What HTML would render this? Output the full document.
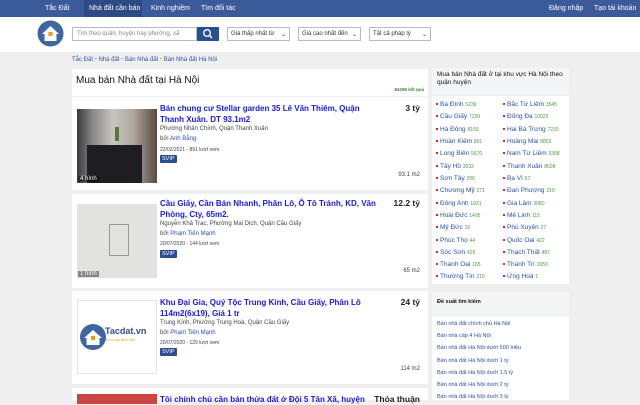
<!DOCTYPE html>
<html><head><meta charset="utf-8"><style>
*{margin:0;padding:0;box-sizing:border-box}
body{width:640px;height:400px;overflow:hidden;background:#efefef;font-family:"Liberation Sans",Arial,sans-serif;position:relative}
.nav{position:absolute;left:0;top:0;width:640px;height:17px;background:#3b5a9a;color:#fff;font-size:7px}
.nav span{position:absolute;top:5px}
.hdr{position:absolute;top:17px;left:0;width:640px;height:35px;background:#fff}
.a{position:absolute}
.link{color:#2b52a8}
.card{position:absolute;left:72px;width:356px;background:#fff}
.img{position:absolute;left:5px;top:12px;width:80px;height:74px;overflow:hidden}
.t{position:absolute;left:88px;top:6px;width:225px;font-size:8px;font-weight:bold;color:#1919e0;line-height:11px}
.pr{position:absolute;right:8px;top:6px;font-size:8.5px;font-weight:bold;color:#222}
.sm{position:absolute;left:88px;font-size:5.8px;color:#444}
.svip{position:absolute;left:88px;background:#2b4e8f;color:#fff;font-size:5.5px;padding:1px 2px;border-radius:1px}
.m2{position:absolute;right:8px;font-size:6px;color:#444}
.cap{position:absolute;left:1px;bottom:1px;color:#fff;font-size:6px;background:rgba(0,0,0,.4);padding:0 2px}
.side{position:absolute;left:432px;width:137px;background:#fff}
.d{position:absolute;font-size:6.5px;color:#2b52a8}
.d:before{content:"";display:inline-block;width:2px;height:2px;background:#e22;margin-right:2px;vertical-align:middle}
.d i{font-style:normal;color:#4a9a3a;font-size:5px}
.s{position:absolute;left:5px;font-size:5.5px;color:#2b52a8}
</style></head><body>
<div class="nav">
<span style="left:45px">Tắc Đất</span>
<div style="position:absolute;left:84px;top:0;width:58px;height:17px;background:#2d4a85"></div>
<span style="left:89px">Nhà đất cần bán</span>
<span style="left:151px">Kinh nghiệm</span>
<span style="left:201px">Tìm đối tác</span>
<span style="left:549px">Đăng nhập</span>
<span style="left:594px">Tạo tài khoản</span>
</div>
<div class="hdr">
<svg class="a" style="left:37px;top:3px" width="27" height="27" viewBox="0 0 27 27"><circle cx="13.5" cy="13.5" r="13" fill="#3e66a0"/><path d="M5 14 L13.5 6 L22 14 H19.5 V21 H7.5 V14Z" fill="#fff"/><rect x="11.5" y="12" width="4" height="4" fill="#e79a1f"/></svg>
<div class="a" style="left:72px;top:10px;width:125px;height:14px;border:1px solid #bbb;font-size:6px;color:#888;padding:3px 4px">Tìm theo quận, huyện hay phường, xã</div>
<div class="a" style="left:197px;top:10px;width:22px;height:14px;background:#2c4f8f"><svg width="22" height="14"><circle cx="10" cy="6" r="3.3" stroke="#fff" stroke-width="1.4" fill="none"/><path d="M12.5 8.5 L15 11" stroke="#fff" stroke-width="1.5"/></svg></div>
<div class="a" style="left:227px;top:10px;width:63px;height:14px;border:1px solid #bbb;font-size:6px;color:#333;padding:3px 3px">Giá thấp nhất từ<span style="position:absolute;right:3px">⌄</span></div>
<div class="a" style="left:298px;top:10px;width:63px;height:14px;border:1px solid #bbb;font-size:6px;color:#333;padding:3px 3px">Giá cao nhất đến<span style="position:absolute;right:3px">⌄</span></div>
<div class="a" style="left:369px;top:10px;width:62px;height:14px;border:1px solid #bbb;font-size:6px;color:#333;padding:3px 3px">Tất cả pháp lý<span style="position:absolute;right:3px">⌄</span></div>
</div>
<div class="a link" style="left:72px;top:57px;font-size:6px">Tắc Đất <span style="color:#e79a1f">•</span> Nhà đất <span style="color:#e79a1f">•</span> Bán Nhà đất <span style="color:#e79a1f">•</span> Bán Nhà đất Hà Nội</div>
<div class="card" style="top:69px;height:27px">
<div class="a" style="left:4px;top:6px;font-size:10px;color:#111">Mua bán Nhà đất tại Hà Nội</div>
<div class="a" style="right:4px;top:18px;font-size:4.5px;color:#3a8a2a;font-weight:bold">84295 kết quả</div>
</div>
<div class="card" style="top:97px;height:93px">
<div class="img" style="background:linear-gradient(90deg,#3a3a3a 0,#8a8a8a 20%,#c8c4c0 45%,#b0a8a0 70%,#5a4a40 100%)"><div style="position:absolute;left:10px;top:36px;width:55px;height:38px;background:#1e1e22"></div><div style="position:absolute;left:38px;top:18px;width:4px;height:14px;background:#5a7a3a"></div><span class="cap">4 hình</span></div>
<div class="t">Bán chung cư Stellar garden 35 Lê Văn Thiêm, Quận Thanh Xuân. DT 93.1m2</div>
<div class="pr">3 tỷ</div>
<div class="sm" style="top:29px;font-size:6px">Phường Nhân Chính, Quận Thanh Xuân</div>
<div class="sm" style="top:39px;font-size:6px">bởi <span class="link">Anh Bằng</span></div>
<div class="sm" style="top:50px;font-size:5px">22/02/2021 - 891 lượt xem</div>
<div class="svip" style="top:58px">SVIP</div>
<div class="m2" style="top:75px">93.1 m2</div>
</div>
<div class="card" style="top:194px;height:94px">
<div class="img" style="top:10px;background:#e2e2df"><div style="position:absolute;left:32px;top:20px;width:20px;height:32px;border:1px solid #999"></div><span class="cap">1 hình</span></div>
<div class="t" style="top:4px">Cầu Giấy, Cần Bán Nhanh, Phân Lô, Ô Tô Tránh, KD, Văn Phòng, Cty, 65m2.</div>
<div class="pr" style="top:4px">12.2 tỷ</div>
<div class="sm" style="top:27px;font-size:6px">Nguyễn Khả Trạc, Phường Mai Dịch, Quận Cầu Giấy</div>
<div class="sm" style="top:37px;font-size:6px">bởi <span class="link">Phạm Tiến Mạnh</span></div>
<div class="sm" style="top:47px;font-size:5px">20/07/2020 - 144 lượt xem</div>
<div class="svip" style="top:56px">SVIP</div>
<div class="m2" style="top:74px">65 m2</div>
</div>
<div class="card" style="top:291px;height:93px">
<div class="img" style="top:9px;border:1px solid #e5e5e5;background:#fff">
<svg style="position:absolute;left:1px;top:22px" width="28" height="28"><circle cx="14" cy="14" r="13" fill="#3e66a0"/><path d="M5 15 L14 7 L23 15 H20.5 V22 H7.5 V15Z" fill="#fff"/><rect x="12" y="13" width="4" height="4" fill="#e79a1f"/></svg>
<div style="position:absolute;left:27px;top:25px;font-size:9px;font-weight:bold;color:#2d4f8a">Tacdat.vn</div>
<div style="position:absolute;left:27px;top:37px;font-size:3.5px;color:#e79a1f;font-style:italic">An cư gia đình Việt</div></div>
<div class="t" style="top:6px">Khu Đại Gia, Quý Tộc Trung Kinh, Cầu Giấy, Phân Lô 114m2(6x19), Giá 1 tr</div>
<div class="pr" style="top:6px">24 tỷ</div>
<div class="sm" style="top:29px;font-size:6px">Trung Kính, Phường Trung Hoà, Quận Cầu Giấy</div>
<div class="sm" style="top:39px;font-size:6px">bởi <span class="link">Phạm Tiến Mạnh</span></div>
<div class="sm" style="top:49px;font-size:5px">20/07/2020 - 129 lượt xem</div>
<div class="svip" style="top:57px">SVIP</div>
<div class="m2" style="top:75px">114 m2</div>
</div>
<div class="card" style="top:388px;height:12px">
<div class="img" style="top:6px;height:10px;background:#c44"></div>
<div class="t" style="top:6px;width:225px;white-space:nowrap;overflow:hidden">Tôi chính chủ cần bán thửa đất ở Đội 5 Tân Xã, huyện</div>
<div class="pr" style="top:6px">Thỏa thuận</div>
</div>
<div class="side" style="top:68px;height:26px;background:#f4f5f7"><div class="a" style="left:5px;top:3px;font-size:6.5px;color:#111;line-height:8px">Mua bán Nhà đất ở tại khu vực Hà Nội theo quận huyện</div></div>
<div class="side" style="top:96px;height:188px"></div>
<div class="d" style="left:436px;top:101px">Ba Đình <i>5239</i></div><div class="d" style="left:503px;top:101px">Bắc Từ Liêm <i>3545</i></div>
<div class="d" style="left:436px;top:113px">Cầu Giấy <i>7159</i></div><div class="d" style="left:503px;top:113px">Đống Đa <i>10025</i></div>
<div class="d" style="left:436px;top:126px">Hà Đông <i>8150</i></div><div class="d" style="left:503px;top:126px">Hai Bà Trưng <i>7230</i></div>
<div class="d" style="left:436px;top:138px">Hoàn Kiếm <i>801</i></div><div class="d" style="left:503px;top:138px">Hoàng Mai <i>8803</i></div>
<div class="d" style="left:436px;top:150px">Long Biên <i>5670</i></div><div class="d" style="left:503px;top:150px">Nam Từ Liêm <i>5308</i></div>
<div class="d" style="left:436px;top:163px">Tây Hồ <i>3032</i></div><div class="d" style="left:503px;top:163px">Thanh Xuân <i>8608</i></div>
<div class="d" style="left:436px;top:175px">Sơn Tây <i>206</i></div><div class="d" style="left:503px;top:175px">Ba Vì <i>67</i></div>
<div class="d" style="left:436px;top:187px">Chương Mỹ <i>271</i></div><div class="d" style="left:503px;top:187px">Đan Phượng <i>210</i></div>
<div class="d" style="left:436px;top:200px">Đông Anh <i>1031</i></div><div class="d" style="left:503px;top:200px">Gia Lâm <i>3080</i></div>
<div class="d" style="left:436px;top:212px">Hoài Đức <i>1405</i></div><div class="d" style="left:503px;top:212px">Mê Linh <i>115</i></div>
<div class="d" style="left:436px;top:224px">Mỹ Đức <i>16</i></div><div class="d" style="left:503px;top:224px">Phú Xuyên <i>27</i></div>
<div class="d" style="left:436px;top:237px">Phúc Thọ <i>44</i></div><div class="d" style="left:503px;top:237px">Quốc Oai <i>422</i></div>
<div class="d" style="left:436px;top:249px">Sóc Sơn <i>425</i></div><div class="d" style="left:503px;top:249px">Thạch Thất <i>487</i></div>
<div class="d" style="left:436px;top:261px">Thanh Oai <i>165</i></div><div class="d" style="left:503px;top:261px">Thanh Trì <i>1650</i></div>
<div class="d" style="left:436px;top:273px">Thường Tín <i>210</i></div><div class="d" style="left:503px;top:273px">Ứng Hoà <i>1</i></div>
<div class="side" style="top:292px;height:25px;background:#f4f5f7"><div class="a" style="left:5px;top:7px;font-size:5.5px;color:#111;font-weight:bold">Đề xuất tìm kiếm</div></div>
<div class="side" style="top:317px;height:83px">
<div class="s" style="top:4px">Bán nhà đất chính chủ Hà Nội</div>
<div class="s" style="top:16px">Bán nhà cấp 4 Hà Nội</div>
<div class="s" style="top:28px">Bán nhà đất Hà Nội dưới 500 triệu</div>
<div class="s" style="top:41px">Bán nhà đất Hà Nội dưới 1 tỷ</div>
<div class="s" style="top:53px">Bán nhà đất Hà Nội dưới 1.5 tỷ</div>
<div class="s" style="top:65px">Bán nhà đất Hà Nội dưới 2 tỷ</div>
<div class="s" style="top:77px">Bán nhà đất Hà Nội dưới 3 tỷ</div>
</div>
</body></html>
